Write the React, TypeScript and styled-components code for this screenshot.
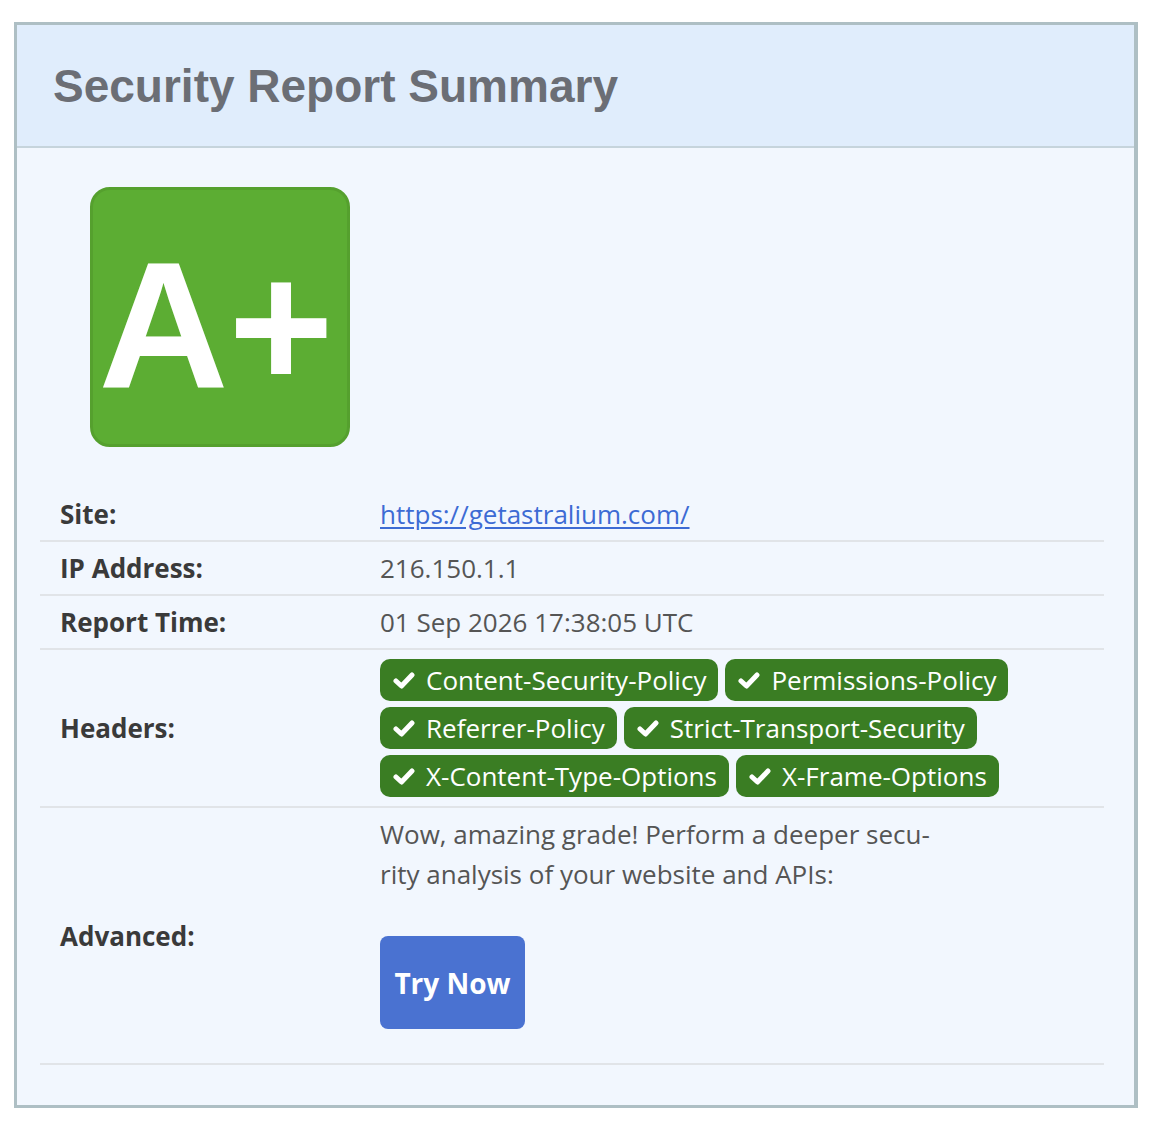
import React from "react";
import styled, { createGlobalStyle } from "styled-components";

const Global = createGlobalStyle`
  html, body { margin: 0; padding: 0; background: #ffffff; }
  body { font-family: "Open Sans", "Noto Sans", sans-serif; }
`;

const Card = styled.section`
  box-sizing: border-box;
  width: 1124px;
  margin: 22px 0 0 14px;
  border: 3px solid #aebfc4;
  border-right-width: 4px;
  background: #f2f7fe;
`;

const Header = styled.header`
  box-sizing: border-box;
  height: 123px;
  padding: 0 0 0 36px;
  display: flex;
  align-items: center;
  background: #e0edfc;
  border-bottom: 2px solid #c6d4dc;
`;

const Title = styled.h1`
  margin: 0;
  font-family: "Liberation Sans", Arial, sans-serif;
  font-weight: 700;
  font-size: 46px;
  color: #6b6e75;
`;

const Body = styled.div`
  padding: 39px 30px 40px 23px;
`;

const Grade = styled.div`
  box-sizing: border-box;
  width: 260px;
  height: 260px;
  margin-left: 50px;
  margin-bottom: 41px;
  border: 3px solid #55a02e;
  border-radius: 20px;
  background: #5cad33;
  display: flex;
  align-items: center;
  justify-content: center;
  padding-top: 18px;
  padding-right: 8px;
  font-family: "Liberation Sans", Arial, sans-serif;
  font-weight: 700;
  font-size: 180px;
  line-height: 1;
  color: #ffffff;
`;

const Row = styled.div<{ $pad?: string }>`
  display: grid;
  grid-template-columns: 320px 1fr;
  align-items: center;
  border-bottom: 2px solid #e1e4e8;
  padding: ${(p) => p.$pad ?? "8px 0"};
`;

const Label = styled.div`
  padding: 0 20px;
  font-weight: 700;
  font-size: 26px;
  line-height: 36px;
  color: #3a3a3a;
`;

const Value = styled.div<{ $pad?: string }>`
  padding: ${(p) => p.$pad ?? "0 20px"};
  font-size: 26px;
  line-height: 36px;
  color: #555555;
`;

const Link = styled.a`
  color: #3d6bd4;
  text-decoration: underline;
  text-underline-offset: 3px;
`;

const Pills = styled.div`
  display: flex;
  flex-wrap: wrap;
  gap: 6px 7px;
`;

const Pill = styled.span`
  box-sizing: border-box;
  height: 42px;
  display: inline-flex;
  align-items: center;
  gap: 11px;
  padding: 0 12px 0 13px;
  border-radius: 10px;
  background: #3a7d23;
  color: #ffffff;
  font-size: 26px;
  line-height: 1;
  svg { flex: none; }
`;

const Blurb = styled.p`
  margin: 0 0 42px;
  line-height: 40px;
`;

const Button = styled.button`
  box-sizing: border-box;
  width: 145px;
  height: 93px;
  border: none;
  border-radius: 8px;
  background: #4a72d1;
  color: #ffffff;
  font-family: "Open Sans", "Noto Sans", sans-serif;
  font-weight: 700;
  font-size: 28px;
  padding: 0;
  cursor: pointer;
`;

const Check = () => (
  <svg width="22" height="17" viewBox="0 0 22 17" aria-hidden="true">
    <polyline
      points="3,9 8.5,14 19,3"
      fill="none"
      stroke="#ffffff"
      strokeWidth="5"
      strokeLinecap="round"
      strokeLinejoin="round"
    />
  </svg>
);

const headers = [
  "Content-Security-Policy",
  "Permissions-Policy",
  "Referrer-Policy",
  "Strict-Transport-Security",
  "X-Content-Type-Options",
  "X-Frame-Options",
];

export default function App() {
  return (
    <>
      <Global />
      <Card>
        <Header>
          <Title>Security Report Summary</Title>
        </Header>
        <Body>
          <Grade>A+</Grade>
          <Row>
            <Label>Site:</Label>
            <Value>
              <Link href="#">https://getastralium.com/</Link>
            </Value>
          </Row>
          <Row>
            <Label>IP Address:</Label>
            <Value>216.150.1.1</Value>
          </Row>
          <Row>
            <Label>Report Time:</Label>
            <Value>01 Sep 2026 17:38:05 UTC</Value>
          </Row>
          <Row $pad="9px 0">
            <Label>Headers:</Label>
            <Value>
              <Pills>
                {headers.map((h) => (
                  <Pill key={h}>
                    <Check />
                    {h}
                  </Pill>
                ))}
              </Pills>
            </Value>
          </Row>
          <Row $pad="0">
            <Label>Advanced:</Label>
            <Value $pad="6px 20px 34px">
              <Blurb>
                Wow, amazing grade! Perform a deeper secu-
                <br />
                rity analysis of your website and APIs:
              </Blurb>
              <Button>Try Now</Button>
            </Value>
          </Row>
        </Body>
      </Card>
    </>
  );
}
